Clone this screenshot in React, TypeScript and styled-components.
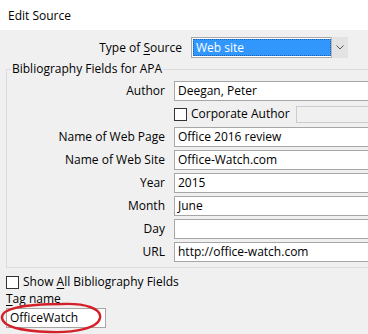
import React from "react";
import styled, { createGlobalStyle } from "styled-components";

const Global = createGlobalStyle`
  html, body { margin: 0; padding: 0; background: #f0f0f0; }
  body { font-family: "Open Sans", "Noto Sans", sans-serif; font-size: 12px; color: #000; }
`;

const Window = styled.div`
  width: 368px;
  height: 334px;
  overflow: hidden;
  background: #f0f0f0;
  position: relative;
`;

const TitleBar = styled.div`
  height: 30px;
  background: #fff;
  display: flex;
  align-items: center;
  padding-left: 8px;
  font-size: 12px;
`;

const Body = styled.div`
  width: 420px;
  padding: 7px 0 0 6px;
  box-sizing: border-box;
`;

const TypeRow = styled.div`
  display: grid;
  grid-template-columns: 176px 157px;
  column-gap: 9px;
  align-items: center;
  height: 21px;
`;

const Label = styled.label`
  text-align: right;
  white-space: nowrap;
  line-height: 16px;
`;

const U = styled.span`
  text-decoration: underline;
  text-underline-offset: 2px;
`;

const Select = styled.div`
  height: 21px;
  box-sizing: border-box;
  border: 1px solid #a8a8a8;
  background: #fff;
  display: flex;
  padding: 1px 0 1px 1px;
`;

const SelectValue = styled.div`
  flex: 1;
  background: #3297fd;
  color: #fff;
  line-height: 17px;
  padding-left: 3px;
  outline: 1px dotted #1a5fb0;
  outline-offset: -1px;
`;

const DropButton = styled.div`
  width: 16px;
  margin: -2px -1px -2px 0;
  background: #e3e3e3;
  border-left: 1px solid #b9b9b9;
  display: flex;
  align-items: center;
  justify-content: center;
`;

const Group = styled.fieldset`
  margin: 3px 0 0 0;
  padding: 4px 0 5px 0;
  border: 1px solid #dcdcdc;
  width: 420px;
  box-sizing: border-box;
`;

const Legend = styled.legend`
  margin-left: 4px;
  padding: 0 1px;
  line-height: 16px;
`;

const Fields = styled.div`
  display: grid;
  grid-template-columns: 158px 1fr;
  column-gap: 9px;
  row-gap: 3px;
  grid-auto-rows: 20px;
  align-items: center;
`;

const TextBox = styled.div<{ $disabled?: boolean }>`
  height: 20px;
  box-sizing: border-box;
  border: 1px solid ${(p) => (p.$disabled ? "#cccccc" : "#a6a6a6")};
  background: ${(p) => (p.$disabled ? "#f0f0f0" : "#fff")};
  line-height: 18px;
  padding-left: 3px;
  white-space: nowrap;
  overflow: hidden;
`;

const CorpCell = styled.div`
  display: flex;
  align-items: center;
  height: 20px;
`;

const CheckBox = styled.span`
  width: 13px;
  height: 13px;
  box-sizing: border-box;
  border: 1px solid #333;
  background: #fff;
  flex: none;
`;

const CheckLabel = styled.span`
  margin-left: 4px;
  line-height: 16px;
  white-space: nowrap;
`;

const CorpBox = styled(TextBox)`
  flex: 1;
  height: 17px;
  margin-left: 6px;
`;

const ShowAllRow = styled.div`
  display: flex;
  align-items: center;
  height: 16px;
  margin-top: 6px;
`;

const TagLabel = styled.div`
  line-height: 16px;
  margin-top: 1px;
`;

const TagBox = styled(TextBox)`
  width: 100px;
  margin-top: 1px;
`;

const Circle = styled.svg`
  position: absolute;
  left: 0;
  top: 299px;
  pointer-events: none;
`;

export default function App() {
  return (
    <>
      <Global />
      <Window>
        <TitleBar>Edit Source</TitleBar>
        <Body>
          <TypeRow>
            <Label>
              Type of <U>S</U>ource
            </Label>
            <Select>
              <SelectValue>Web site</SelectValue>
              <DropButton>
                <svg width="8" height="5" viewBox="0 0 8 5">
                  <path d="M0.5 0.5 L4 4 L7.5 0.5" fill="none" stroke="#555" strokeWidth="1" />
                </svg>
              </DropButton>
            </Select>
          </TypeRow>
          <Group>
            <Legend>Bibliography Fields for APA</Legend>
            <Fields>
              <Label>Author</Label>
              <TextBox>Deegan, Peter</TextBox>
              <span />
              <CorpCell>
                <CheckBox />
                <CheckLabel>Corporate Author</CheckLabel>
                <CorpBox $disabled />
              </CorpCell>
              <Label>Name of Web Page</Label>
              <TextBox>Office 2016 review</TextBox>
              <Label>Name of Web Site</Label>
              <TextBox>Office-Watch.com</TextBox>
              <Label>Year</Label>
              <TextBox>2015</TextBox>
              <Label>Month</Label>
              <TextBox>June</TextBox>
              <Label>Day</Label>
              <TextBox />
              <Label>URL</Label>
              <TextBox>http://office-watch.com</TextBox>
            </Fields>
          </Group>
          <ShowAllRow>
            <CheckBox />
            <CheckLabel>
              Show <U>A</U>ll Bibliography Fields
            </CheckLabel>
          </ShowAllRow>
          <TagLabel>
            <U>T</U>ag name
          </TagLabel>
          <TagBox>OfficeWatch</TagBox>
        </Body>
        <Circle width="110" height="36" viewBox="0 0 110 36">
          <path
            d="M62 5 C 86 4, 102 10, 100 19 C 98 29, 75 34, 50 33 C 22 32, 3 28, 2 19 C 1 10, 22 5, 62 5 Z"
            fill="none"
            stroke="#d42028"
            strokeWidth="2.4"
          />
        </Circle>
      </Window>
    </>
  );
}
